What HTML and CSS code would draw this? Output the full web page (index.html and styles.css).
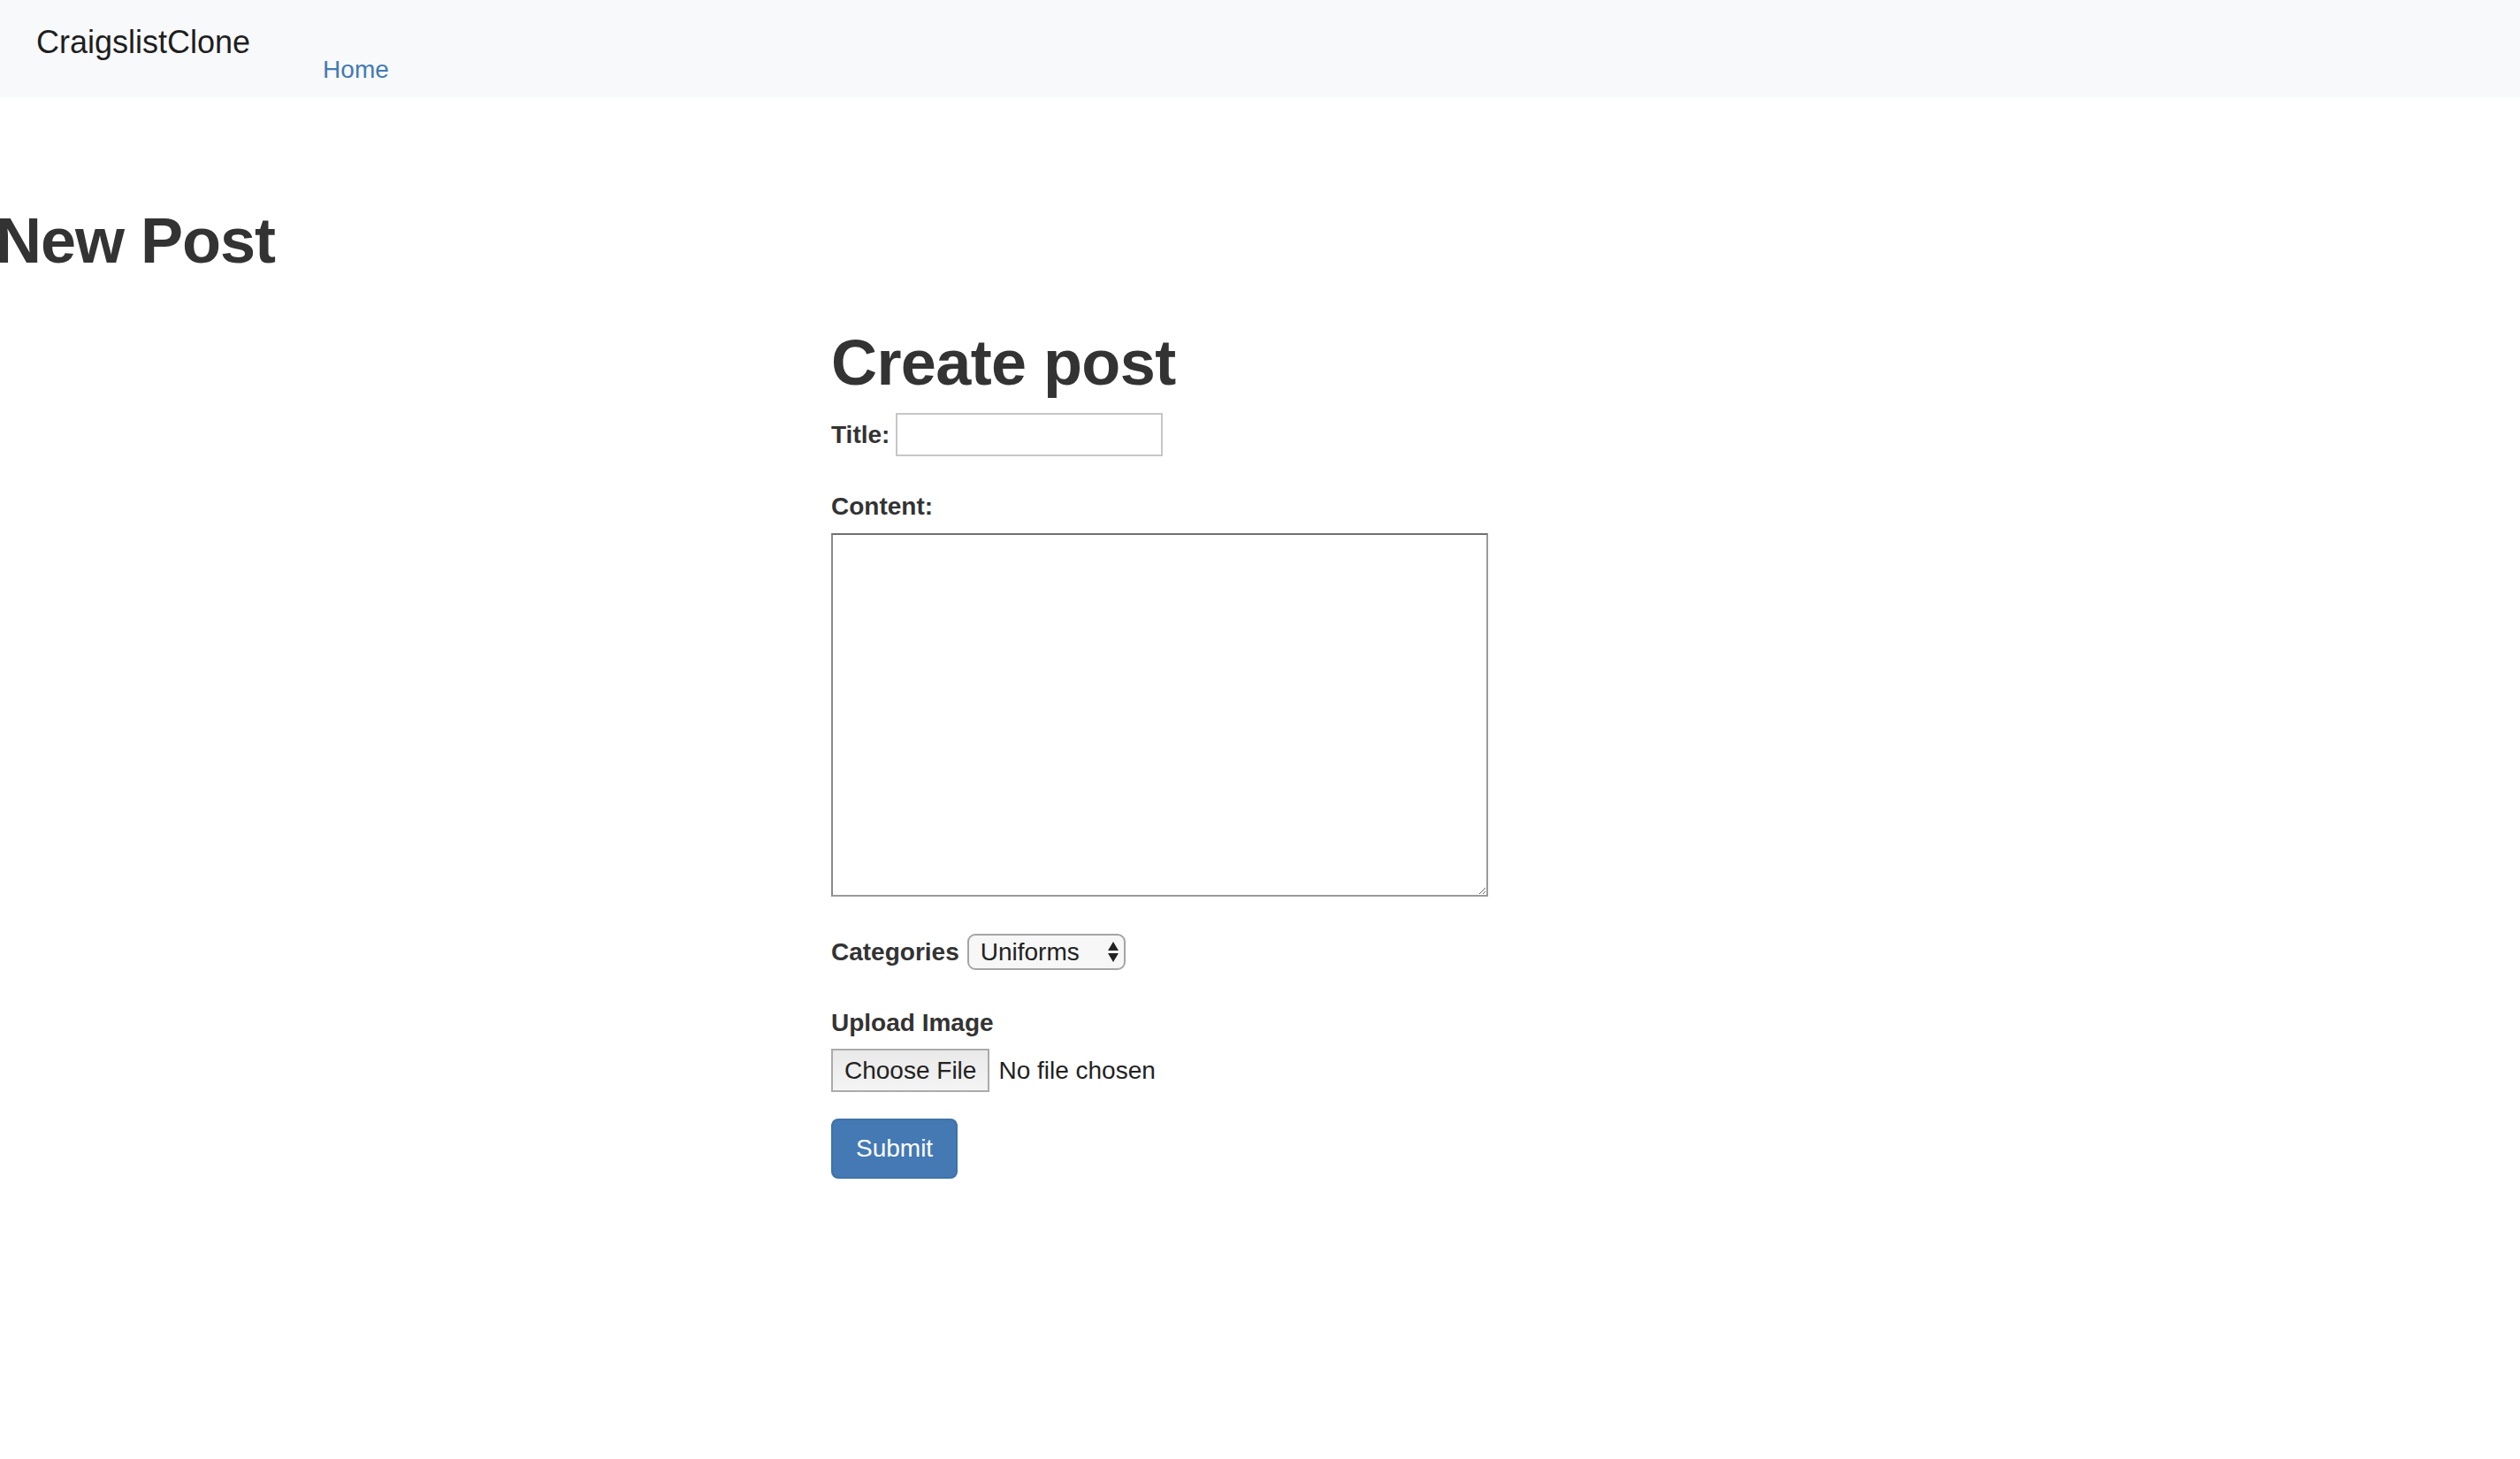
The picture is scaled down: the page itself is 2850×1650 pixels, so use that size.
FILE: index.html
```html
<!DOCTYPE html>
<html lang="en">
<head>
<meta charset="utf-8">
<title>CraigslistClone</title>
<link rel="stylesheet" href="styles.css">
</head>
<body>
<header class="navbar">
  <a class="brand" href="#">CraigslistClone</a>
  <ul class="nav-links">
    <li><a href="#">Home</a></li>
  </ul>
</header>

<h1 class="page-title">New Post</h1>

<section class="form-wrap">
  <h2 class="form-title">Create post</h2>
  <form class="post-form">
    <div class="row title-row">
      <label class="lbl" for="title">Title:</label>
      <input class="text-input" id="title" type="text">
    </div>

    <label class="lbl block-lbl content-lbl" for="content">Content:</label>
    <textarea class="content-area" id="content"></textarea>

    <div class="row cat-row">
      <span class="lbl">Categories</span>
      <div class="select-box">
        <span class="select-value">Uniforms</span>
        <svg class="select-arrows" width="12" height="24" viewBox="0 0 12 24"><polygon points="0,10 6,0 12,10" fill="#222"/><polygon points="0,13 12,13 6,23" fill="#222"/></svg>
      </div>
    </div>

    <span class="lbl block-lbl upload-lbl">Upload Image</span>
    <div class="row file-row">
      <button type="button" class="file-btn">Choose File</button>
      <span class="file-status">No file chosen</span>
    </div>

    <button type="button" class="submit-btn">Submit</button>
  </form>
</section>
</body>
</html>
```

FILE: styles.css
```css
html, body {
  margin: 0;
  padding: 0;
  background: #ffffff;
}

body {
  font-family: "Liberation Sans", Arial, Helvetica, sans-serif;
  color: #333333;
  font-size: 28px;
  line-height: 40px;
}

.navbar {
  display: flex;
  align-items: flex-start;
  height: 110px;
  background: #f8f9fa;
}

.brand {
  margin: 28px 0 0 41px;
  font-size: 36px;
  line-height: 40px;
  color: rgba(0, 0, 0, 0.9);
  text-decoration: none;
}

.nav-links {
  list-style: none;
  margin: 59px 0 0 82px;
  padding: 0;
}

.nav-links a {
  font-size: 28px;
  line-height: 40px;
  color: #4479b3;
  text-decoration: none;
}

.page-title {
  margin: 122px 0 0 -5px;
  font-size: 72px;
  line-height: 80px;
  font-weight: bold;
  letter-spacing: -1px;
  color: #333333;
}

.form-wrap {
  margin-left: 940px;
}

.form-title {
  margin: 58px 0 0 0;
  font-size: 72px;
  line-height: 80px;
  font-weight: bold;
  letter-spacing: -0.6px;
  color: #333333;
}

.post-form {
  display: flex;
  flex-direction: column;
  align-items: flex-start;
}

.row {
  display: flex;
  align-items: center;
}

.lbl {
  font-weight: bold;
  font-size: 28px;
  line-height: 40px;
  color: #333333;
}

.block-lbl {
  display: block;
}

.title-row {
  margin-top: 17px;
  gap: 7px;
}

.text-input {
  box-sizing: border-box;
  width: 302px;
  height: 49px;
  margin: 0;
  padding: 0 8px;
  border: 2px solid #c6c6c6;
  background: #ffffff;
  font-family: inherit;
  font-size: 28px;
}

.content-lbl {
  margin-top: 37px;
  margin-bottom: 10px;
}

.content-area {
  display: block;
  box-sizing: border-box;
  width: 743px;
  height: 411px;
  margin: 0;
  padding: 4px;
  border-style: solid;
  border-width: 2px;
  border-color: #6f6f6f #9a9a9a #9a9a9a #8a8a8a;
  background: #ffffff;
  font-family: inherit;
  font-size: 28px;
}

.cat-row {
  margin-top: 42px;
  gap: 9px;
}

.select-box {
  box-sizing: border-box;
  width: 179px;
  height: 41px;
  display: flex;
  align-items: center;
  justify-content: space-between;
  padding: 0 6px 0 13px;
  border: 2px solid #a5a5a5;
  border-radius: 9px;
  background: #f7f7f7;
  font-size: 28px;
  line-height: 36px;
  color: #222222;
}

.select-arrows {
  display: block;
}

.upload-lbl {
  margin-top: 40px;
  margin-bottom: 9px;
}

.file-row {
  gap: 10px;
}

.file-btn {
  box-sizing: border-box;
  height: 49px;
  margin: 0;
  padding: 0 13px;
  border: 2px solid #ababab;
  border-radius: 0;
  background: linear-gradient(#e9e9e9, #f4f4f4);
  font-family: inherit;
  font-size: 28px;
  line-height: 40px;
  color: #222222;
}

.file-status {
  font-size: 28px;
  line-height: 40px;
  color: #222222;
}

.submit-btn {
  margin: 30px 0 0 0;
  padding: 12px 26px;
  border: 2px solid #3f72aa;
  border-radius: 8px;
  background: #4479b3;
  color: #ffffff;
  font-family: inherit;
  font-size: 28px;
  line-height: 40px;
}
```
